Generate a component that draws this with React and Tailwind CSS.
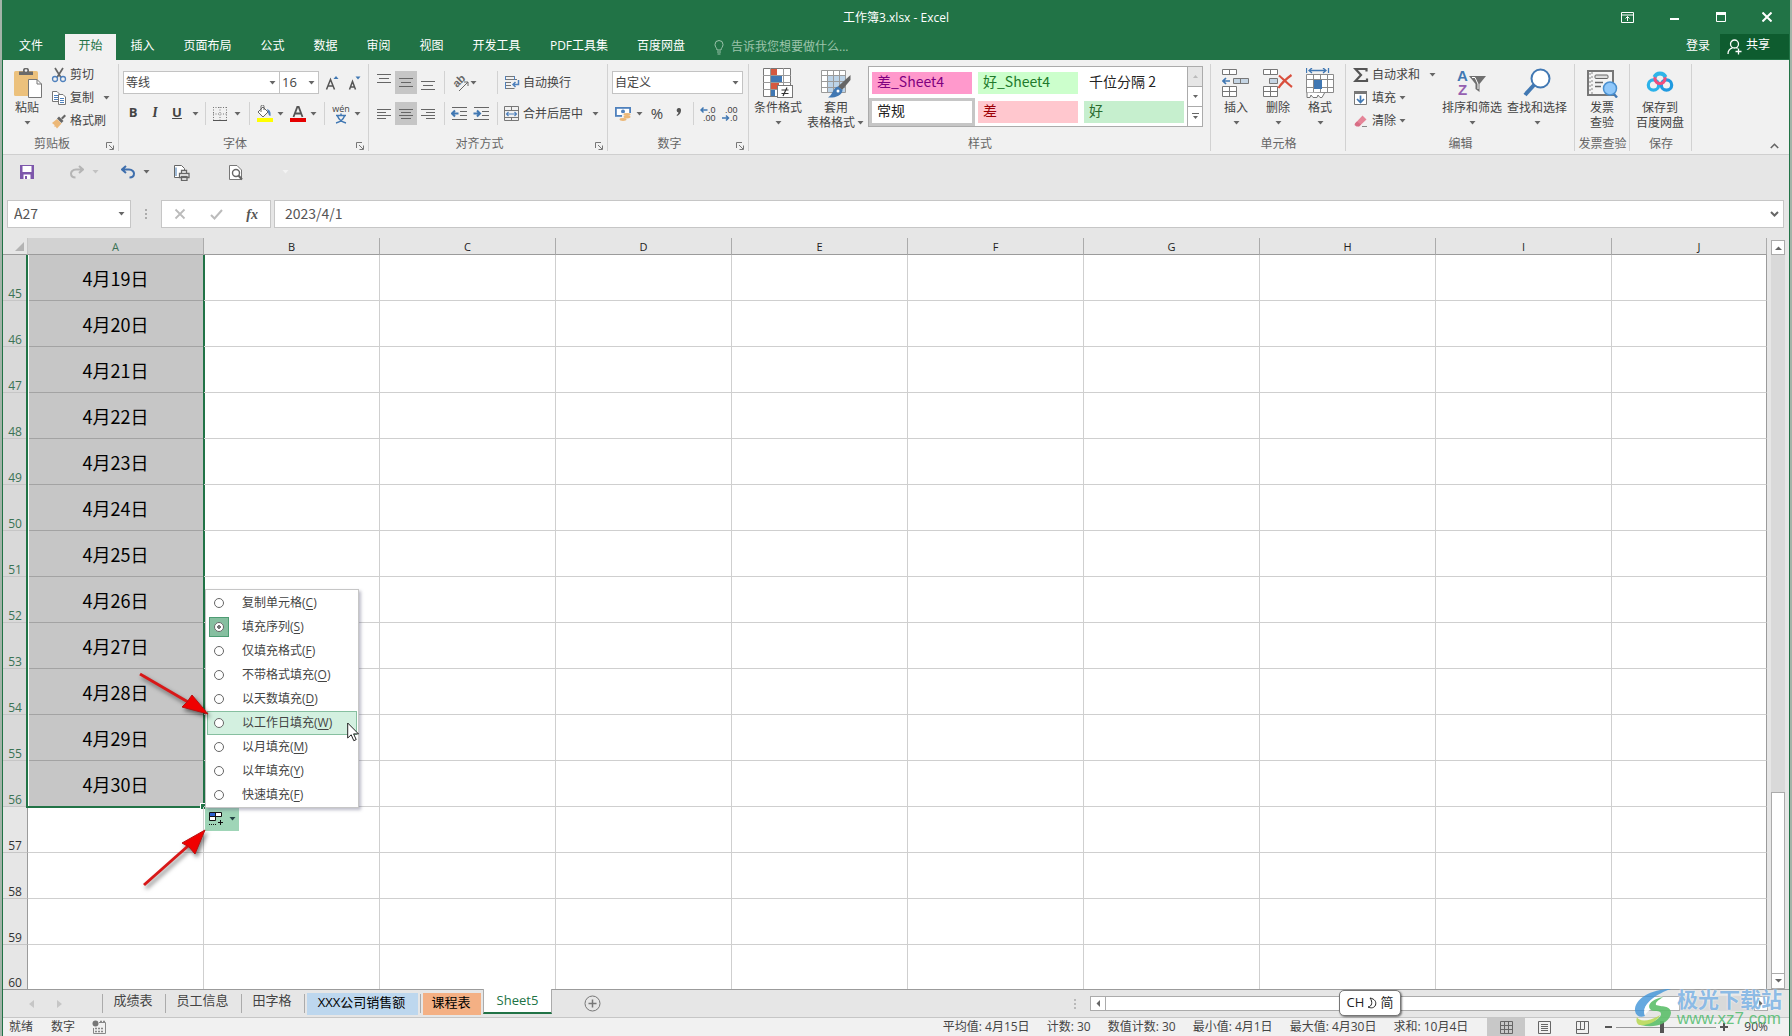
import React from "react";

/* ---------- small shared pieces ---------- */

function Caret({ className = "w-3.5", color = "#666" }) {
  return (
    <span className={`flex shrink-0 items-center justify-center ${className}`}>
      <svg width="7" height="4" viewBox="0 0 7 4"><path d="M0.5 0H6.5L3.5 3.6Z" fill={color} /></svg>
    </span>
  );
}

function Sep({ className = "" }) {
  return <span className={`h-[23px] w-px shrink-0 bg-[#d2d2d2] ${className}`} />;
}

function Group({ label, launcher, className, children, labelClass = "" }) {
  return (
    <section className={`relative flex h-[93px] shrink-0 flex-col ${className}`}>
      <div className="h-[76px]">{children}</div>
      <div className={`whitespace-nowrap text-center leading-4 text-[#666] ${labelClass}`}>{label}</div>
      {launcher && (
        <button aria-label={`${label}设置`} className="absolute bottom-[3px] right-[5px]">
          <svg width="8" height="8" viewBox="0 0 8 8" fill="none" stroke="#777"><path d="M0.5 6V0.5H6M3 3L7 7M7.5 3.5V7.5H3.5" /></svg>
        </button>
      )}
      <span className="absolute right-0 top-1 h-[87px] w-px bg-[#d2d2d2]" />
    </section>
  );
}

function Big({ icon, lines, arrow, className }) {
  return (
    <button className={`flex shrink-0 flex-col items-center pt-2 leading-[15px] ${className}`}>
      <span className="mb-0.5 flex h-[30px] items-center justify-center">{icon}</span>
      {lines.map((l, i) => (
        <span key={l} className="flex whitespace-nowrap">{l}{arrow === "inline" && i === lines.length - 1 && <Caret className="w-2.5" />}</span>
      ))}
      {arrow === "below" && <Caret className="h-4 w-3.5" />}
    </button>
  );
}

function Small({ icon, label, caret }) {
  return (
    <button className="flex h-[23px] items-center whitespace-nowrap">
      <span className="mr-[3px] flex w-4 justify-center">{icon}</span>
      <span>{label}</span>
      {caret && <Caret className={caret} />}
    </button>
  );
}

function Combo({ label, value, className }) {
  return (
    <div className={`relative h-[23px] border border-[#c3c3c3] bg-white ${className}`}>
      <select aria-label={label} className="h-full w-full appearance-none bg-transparent pl-0.5 text-[#444] outline-none">
        <option>{value}</option>
      </select>
      <Caret className="pointer-events-none absolute right-0 top-0 h-full w-3.5" />
    </div>
  );
}

/* ---------- icons ---------- */

const S = ({ w = 16, h = 16, children, ...p }) => (
  <svg width={w} height={h} viewBox={`0 0 ${w} ${h}`} fill="none" aria-hidden="true" {...p}>{children}</svg>
);

const PasteIcon = () => (
  <S w={32} h={30}>
    <rect x="3" y="3" width="24" height="25" rx="1.5" fill="#ecc17c" />
    <path d="M8 7V3.5H12V2A3 2.2 0 0 1 18 2V3.5H22V7Z" fill="#6a6a6a" /><circle cx="15" cy="2.5" r="1.3" fill="#f1f1f1" />
    <path d="M17.5 11.5H26L30.5 16V29.5H17.5Z" fill="#fff" stroke="#777" /><path d="M26 11.5V16H30.5" stroke="#777" />
  </S>
);
const CutIcon = () => (
  <S><path d="M4 1L10 10.5M12 1L6 10.5" stroke="#666" strokeWidth="1.7" /><circle cx="4" cy="12" r="2.5" stroke="#4f81bd" strokeWidth="1.3" /><circle cx="12" cy="12" r="2.5" stroke="#4f81bd" strokeWidth="1.3" /></S>
);
const CopyIcon = () => (
  <S><path d="M1.5 1.5H6L8.5 4V11.5H1.5Z" fill="#fff" stroke="#777" /><path d="M3 5.5H7M3 7.5H7M3 9.5H7" stroke="#4f81bd" /><path d="M7.5 4.5H12L14.5 7V14.5H7.5Z" fill="#fff" stroke="#777" /><path d="M9 8.5H13M9 10.5H13M9 12.5H13" stroke="#4f81bd" /></S>
);
const BrushIcon = () => (
  <S><path d="M1 10L6 6L10.5 10.5L6 15.5L4.5 13.5L3.5 14L3.5 12Z" fill="#ecb878" /><path d="M6 5.5L8 3.5L12.5 8L10.5 10Z" fill="#666" /><path d="M10 5L13.5 1.5L15 3L11.5 6.5Z" fill="#666" /></S>
);
const lines = (xs) => <S w={14} h={14} shapeRendering="crispEdges"><path d={xs} stroke="#666" /></S>;
const BordersIcon = () => (
  <S><path d="M1.5 1V15M8 1V15M14.5 1V15M1 1.5H15M1 8H15" stroke="#777" strokeDasharray="1 1.5" /><path d="M1 14.5H15" stroke="#555" /></S>
);
const BucketIcon = () => (
  <S w={18} h={18}><path d="M3 7L8 2L13 7L8 12Z" fill="#fff" stroke="#666" /><path d="M6 7V1.5A1.5 1.5 0 0 1 9 1.5V5" stroke="#666" /><path d="M12 4C15 5 16 7 15.5 11C14 11 13.5 9.5 13 7Z" fill="#4f81bd" /><rect x="2" y="13" width="16" height="4" fill="#ffff00" /></S>
);
const FontColorIcon = () => (
  <S w={18} h={18}><path d="M5.5 12L9.3 2H10.7L14.5 12M7 8.5H13" stroke="#555" strokeWidth="1.8" /><rect x="2" y="13" width="16" height="4" fill="#e60000" /></S>
);
const OrientIcon = () => (
  <S w={20} h={20}><text x="0" y="0" fontSize="11" fontWeight="bold" fill="#666" fontFamily="Liberation Sans, sans-serif" transform="translate(7 15) rotate(-45)">ab</text><path d="M9 18L18 9M14 9H18V13" stroke="#666" /></S>
);
const WrapIcon = () => (
  <S><path d="M1 1.5H10.5M1 4.5H13M1 7.5H7M1 10.5H7M1 13.5H10.5" stroke="#777" /><path d="M1.5 1V5M10.5 1V5M1.5 7V14" stroke="#4f81bd" /><path d="M14.5 5V9.5H9.5M11.5 7L9 9.5L11.5 12" stroke="#4f81bd" strokeWidth="1.5" /></S>
);
const MergeIcon = () => (
  <S><path d="M0.5 0.5H14.5V14.5H0.5ZM0.5 4.5H14.5M0.5 11.5H14.5M7.5 0.5V4.5M7.5 11.5V14.5" stroke="#777" /><path d="M2.5 8H12.5M4.5 6L2.5 8L4.5 10M10.5 6L12.5 8L10.5 10" stroke="#4f81bd" strokeWidth="1.2" /></S>
);
const Indent = ({ inc }) => (
  <S><path d="M1 1.5H16M9 5.5H16M9 9.5H16M1 13.5H16" stroke="#666" /><path d={inc ? "M0.5 7.5H7M4 4.5L7 7.5L4 10.5" : "M1 7.5H7.5M4 4.5L1 7.5L4 10.5"} stroke="#4178b3" strokeWidth="2" /></S>
);
const MoneyIcon = () => (
  <S><rect x="0.9" y="1.9" width="14.2" height="8" fill="#fff" stroke="#4f81bd" strokeWidth="1.8" /><circle cx="8" cy="5.5" r="2" fill="#4f81bd" /><rect x="7" y="7" width="9" height="9" fill="#f1f1f1" /><ellipse cx="12" cy="8.5" rx="3.5" ry="1.4" fill="#ecb878" /><ellipse cx="12" cy="11" rx="3.5" ry="1.4" fill="#ecb878" /><ellipse cx="8" cy="13.5" rx="3.5" ry="1.4" fill="#ecb878" /></S>
);
const DecIcon = ({ less }) => (
  <S w={18} h={16}>
    <g fontSize="9" fill="#444" fontFamily="Liberation Sans, sans-serif">
      <text x={less ? 3 : 8} y="7">{less ? ".00" : ".0"}</text>
      <text x={less ? 8 : 3} y="15">{less ? ".0" : ".00"}</text>
    </g>
    <path d={less ? "M0 12H6.5M4 9.5L6.5 12L4 14.5" : "M1 4H7.5M3.5 1.5L1 4L3.5 6.5"} stroke="#4178b3" strokeWidth="1.5" />
  </S>
);
const CondIcon = () => (
  <S w={30} h={30}>
    <path d="M0.5 0.5H27.5V28.5H0.5Z" fill="#fff" stroke="#777" /><path d="M7.5 0V28M20.5 0V28M0 7.5H28M0 14.5H28M0 21.5H28" stroke="#999" />
    <rect x="8" y="1" width="6" height="6" fill="#d5593f" /><rect x="8" y="8" width="11" height="6" fill="#4178b3" /><rect x="8" y="15" width="8" height="6" fill="#d5593f" /><rect x="8" y="22" width="4" height="6" fill="#4178b3" />
    <rect x="14.5" y="17.5" width="15" height="12" fill="#fff" stroke="#777" /><path d="M18.5 22H25.5M18.5 25.5H25.5M24 19.5L20 28" stroke="#333" strokeWidth="1.2" />
  </S>
);
const TableFmtIcon = () => (
  <S w={30} h={30}>
    <path d="M0.5 2.5H24.5V24.5H0.5Z" fill="#fff" /><rect x="7" y="8" width="17" height="16" fill="#bcd3e8" /><path d="M0.5 2.5H24.5V24.5H0.5ZM6.5 2V25M12.5 2V25M18.5 2V25M0 7.5H25M0 13.5H25M0 19.5H25" stroke="#9a9a9a" />
    <path d="M29.5 7V12L21 22L17 18.5Z" fill="#666" /><path d="M17 18.5L21.5 22C21 28 14 30 7 29.5C12 27 11.5 20 17 18.5Z" fill="#4178b3" /><circle cx="17" cy="23" r="1.5" fill="#fff" />
  </S>
);
const InsertIcon = () => (
  <S w={28} h={30}>
    <g stroke="#777" fill="#fff"><path d="M0.5 1.5H14.5V6.5H0.5ZM7.5 1.5V6.5M0.5 18.5H14.5V28.5H0.5ZM0.5 23.5H14.5M7.5 18.5V28.5" /><path d="M11.5 10.5H26.5V15.5H11.5ZM18.5 10.5V15.5" fill="#c5d5e4" /></g>
    <path d="M1 13H8M4 10L1 13L4 16" stroke="#4178b3" strokeWidth="1.7" />
  </S>
);
const DeleteIcon = () => (
  <S w={30} h={30}>
    <g stroke="#777" fill="#fff"><path d="M0.5 1.5H14.5V6.5H0.5ZM7.5 1.5V6.5M0.5 18.5H14.5V28.5H0.5ZM0.5 23.5H14.5M7.5 18.5V28.5" /><path d="M6.5 10.5H14.5V15.5H6.5Z" fill="#c5d5e4" /></g>
    <path d="M16 7.5C20 11 25 16 29 19M28.5 7C23 11 18 16 15.5 20" stroke="#d94f3d" strokeWidth="2.2" />
  </S>
);
const FormatIcon = () => (
  <S w={28} h={30}>
    <path d="M0.5 0V5M22.5 0V5M3 2.5H20M6 0L3 2.5L6 5M17 0L20 2.5L17 5" stroke="#4178b3" strokeWidth="1.3" />
    <path d="M0.5 6.5H27.5V24.5H0.5Z" fill="#fff" /><path d="M0.5 6.5H27.5V24.5H0.5ZM7.5 6V25M14.5 6V25M21.5 6V25M0 11.5H28M0 19.5H28" stroke="#8a8a8a" /><rect x="8" y="12" width="8" height="9" fill="#4178b3" />
    <path d="M1 24.5V29.5H4L5 27L7 29.5H11L12 27L14 29.5H16L18.5 25" stroke="#777" fill="#fff" />
  </S>
);
const SigmaIcon = () => <S><path d="M13.5 4.5V2H2.5L8 8L2.5 14H14V11.5" stroke="#555" strokeWidth="2.2" /></S>;
const FillIcon = () => <S><path d="M1.5 1.5H13.5V14.5H1.5Z" fill="#fff" stroke="#777" /><rect x="1" y="1" width="13" height="3" fill="#777" /><path d="M7.5 5.5V12.5M4 9L7.5 12.5L11 9" stroke="#4178b3" strokeWidth="1.7" /></S>;
const EraserIcon = () => <S><path d="M2 10.5L9.5 2.5L13.5 6.5L6 13.5Z" fill="#e58598" /><path d="M2 10.5L4 8.5L8 11.5L6 13.5H3.5L1.5 12Z" fill="#d86d85" /><path d="M9 13.5H14" stroke="#888" /></S>;
const SortIcon = () => (
  <S w={30} h={30}>
    <g fontSize="15" fontWeight="bold" fontFamily="Liberation Sans, sans-serif"><text x="0" y="13" fill="#4178b3">A</text><text x="1" y="27" fill="#9560b0">Z</text></g>
    <path d="M12 8H29L22.5 16V24L18.5 21V16Z" fill="#6f6f6f" /><path d="M15 9.5H18L21 16V21" stroke="#fff" strokeWidth="1" />
  </S>
);
const FindIcon = () => <S w={30} h={30}><circle cx="18.5" cy="10.5" r="9" fill="#fff" stroke="#4178b3" strokeWidth="2" /><path d="M12 17L3 27" stroke="#4178b3" strokeWidth="4" /></S>;
const InvoiceIcon = () => (
  <S w={32} h={30}>
    <rect x="2" y="3" width="25" height="24" fill="#f4f4f4" stroke="#777" strokeWidth="2" /><path d="M6 4V26M4 5V25" stroke="#888" strokeDasharray="2 2" /><rect x="9" y="7" width="13" height="3.5" rx="1" fill="#ddd" stroke="#666" /><path d="M9 14.5H17M9 18.5H15" stroke="#666" strokeWidth="1.5" />
    <path d="M27 25L31 29.5" stroke="#4178b3" strokeWidth="2.4" /><circle cx="24" cy="20.5" r="6.5" fill="#90c8fa" stroke="#4a90d0" strokeWidth="1.5" />
  </S>
);
const BaiduIcon = () => (
  <S w={28} h={30}>
    <circle cx="7.5" cy="17" r="5.2" stroke="#2bb2ea" strokeWidth="3.2" /><circle cx="20.5" cy="17" r="5.2" stroke="#209ae0" strokeWidth="3.2" />
    <circle cx="14" cy="10.5" r="5" stroke="#ef4f7d" strokeWidth="3.2" /><path d="M8.5 9A6 6 0 0 1 19.5 9" stroke="#2fb5e8" strokeWidth="4" />
  </S>
);

/* ---------- title and tabs ---------- */

const TABS = [
  ["文件", "w-[62px]"], ["开始", "w-[51px]"], ["插入", "w-[53px]"], ["页面布局", "w-[77px]"], ["公式", "w-[53px]"], ["数据", "w-[53px]"],
  ["审阅", "w-[53px]"], ["视图", "w-[53px]"], ["开发工具", "w-[77px]"], ["PDF工具集", "w-[88px]"], ["百度网盘", "w-[76px]"],
];

function TitleBar() {
  return (
    <header className="bg-[#217346] text-white">
      <div className="flex h-[34px] items-center px-[17px]">
        <div className="flex-1" />
        <h1 className="pt-0.5">工作簿3.xlsx - Excel</h1>
        <div className="flex flex-1 justify-end">
          <button aria-label="功能区显示选项" className="mr-9"><S w={13} h={11}><path d="M0.5 0.5H12.5V10.5H0.5ZM0.5 3H12.5M6.5 9V4.5M4.5 6.5L6.5 4.5L8.5 6.5" stroke="#fff" /></S></button>
          <button aria-label="最小化" className="mr-[37px] mt-1"><S w={9} h={2}><path d="M0 1H9" stroke="#fff" strokeWidth="2" /></S></button>
          <button aria-label="最大化" className="mr-9"><S w={10} h={10}><path d="M0.5 0.5H9.5V9.5H0.5Z" stroke="#fff" /><path d="M0 1.5H10" stroke="#fff" strokeWidth="3" /></S></button>
          <button aria-label="关闭"><S w={10} h={10}><path d="M0.5 0.5L9.5 9.5M9.5 0.5L0.5 9.5" stroke="#fff" strokeWidth="2" /></S></button>
        </div>
      </div>
      <nav className="flex h-[26px]">
        {TABS.map(([t, w], i) => (
          <button key={t} className={`shrink-0 whitespace-nowrap pb-0.5 ${w} ${i === 1 ? "bg-[#f1f1f1] text-[#217346]" : ""} ${i === 0 ? "pr-1.5" : ""}`}>{t}</button>
        ))}
        <label className="ml-[15px] flex items-center text-[#9cc4ab]">
          <S w={10} h={15}><path d="M3 10C3 8 1 7 1 4.5A4 4 0 0 1 9 4.5C9 7 7 8 7 10ZM3 12H7M3.5 14H6.5" stroke="#9cc4ab" /></S>
          <input aria-label="告诉我您想要做什么" placeholder="告诉我您想要做什么..." className="ml-[7px] w-40 bg-transparent outline-none placeholder:text-[#9cc4ab]" />
        </label>
        <div className="flex-1" />
        <button className="mr-[10px] pb-0.5">登录</button>
        <button className="flex h-[25px] w-[69px] items-center bg-[#0e5c2f] pl-[7px]">
          <S w={15} h={16}><circle cx="7.5" cy="5" r="4" stroke="#fff" strokeWidth="1.3" /><path d="M1 15C1 11.5 3 9.5 5.5 8.8M9.5 8.5L10.5 9.5M11.5 9.5V15.5M8.5 12.5H14.5" stroke="#fff" strokeWidth="1.3" /></S>
          <span className="ml-1 pb-1">共享</span>
        </button>
      </nav>
    </header>
  );
}

/* ---------- ribbon ---------- */

const STYLES = [
  ["差_Sheet4", "bg-[#ff99cc] text-[#800080]"],
  ["好_Sheet4", "bg-[#ccffcc] text-[#217a2b]"],
  ["千位分隔 2", "bg-white text-[#222]"],
  ["常规", "bg-white text-[#222]"],
  ["差", "bg-[#ffc7ce] text-[#9c0006]"],
  ["好", "bg-[#c6efce] text-[#2a6b2f]"],
];

const toolRow = "flex h-[23px] items-center";
const alignBtn = "flex h-[23px] w-[22px] shrink-0 justify-center";

function Ribbon() {
  return (
    <div className="flex h-[95px] border-b border-[#cfcfcf] bg-[#f1f1f1] text-[#444]">
      <Group label="剪贴板" launcher className="w-[116px]" labelClass="pr-[18px]">
        <div className="flex">
          <Big icon={<PasteIcon />} lines={["粘贴"]} arrow="below" className="w-[48px]" />
          <div className="pt-[3px]">
            <Small icon={<CutIcon />} label="剪切" />
            <Small icon={<CopyIcon />} label="复制" caret="ml-[5px] w-3.5" />
            <Small icon={<BrushIcon />} label="格式刷" />
          </div>
        </div>
      </Group>

      <Group label="字体" launcher className="w-[250px]" labelClass="pr-[18px]">
        <div className={`${toolRow} mt-[11px] pl-1`}>
          <Combo label="字体" value="等线" className="w-[157px]" />
          <Combo label="字号" value="16" className="-ml-px w-10 [&>select]:text-[13px]" />
          <button aria-label="增大字号" className="ml-1.5"><S><path d="M1.5 14.5L5.5 4.5L9.5 14.5M3 11H8" stroke="#555" strokeWidth="1.5" /><path d="M8.5 4H13.5L11 1Z" fill="#4178b3" /></S></button>
          <button aria-label="减小字号" className="ml-1.5"><S><path d="M2.5 14.5L5.5 6.5L8.5 14.5M3.5 12H7.5" stroke="#555" strokeWidth="1.5" /><path d="M8.5 1.5H13.5L11 4.5Z" fill="#4178b3" /></S></button>
        </div>
        <div className={`${toolRow} mt-2 pl-[3px]`}>
          <button className="w-[22px] pb-0.5 text-[13px] font-bold">B</button>
          <button className="w-[22px] pb-0.5 font-serif text-[14px] font-bold italic">I</button>
          <button className="w-[22px] pb-0.5 text-[13px] font-bold underline">U</button>
          <Caret />
          <Sep className="ml-[3px]" />
          <button aria-label="边框" className="ml-1.5"><BordersIcon /></button><Caret className="ml-0.5 w-3.5" />
          <Sep className="ml-[5px]" />
          <button aria-label="填充颜色" className="ml-[5px]"><BucketIcon /></button><Caret />
          <button aria-label="字体颜色" className="ml-px"><FontColorIcon /></button><Caret />
          <Sep className="ml-1" />
          <button aria-label="显示或隐藏拼音字段" className="ml-1.5">
            <S w={20} h={22} className="overflow-visible">
              <text x="10" y="9" textAnchor="middle" fontSize="9" fill="#444">wén</text>
              <path d="M5 12.5H15M10 10.5V12.5M6.5 13C8 17 11 19 15 20M13.5 13C12 17 9 19 5 20" stroke="#4178b3" strokeWidth="1.5" />
            </S>
          </button>
          <Caret className="w-3" />
        </div>
      </Group>

      <Group label="对齐方式" launcher className="w-[239px]" labelClass="pr-[18px]">
        <div className={`${toolRow} mt-[11px] pl-1`}>
          <button aria-label="顶端对齐" className={`${alignBtn} pt-[3px]`}>{lines("M0 .5H14M2 4.5H12M0 8.5H14")}</button>
          <button aria-label="垂直居中" className={`${alignBtn} items-center bg-[#c6c6c6]`}>{lines("M0 2.5H14M2 6.5H12M0 10.5H14")}</button>
          <button aria-label="底端对齐" className={`${alignBtn} items-end pb-1`}>{lines("M0 5.5H14M2 9.5H12M0 13.5H14")}</button>
          <Sep className="ml-[5px]" />
          <button aria-label="方向" className="ml-[5px]"><OrientIcon /></button><Caret className="-ml-1 w-3.5" />
          <Sep className="ml-[17px]" />
          <button className="ml-1.5 flex items-center gap-[3px]"><WrapIcon />自动换行</button>
        </div>
        <div className={`${toolRow} mt-2 pl-1`}>
          <button aria-label="左对齐" className={`${alignBtn} items-center`}>{lines("M0 2.5H14M0 5.5H9M0 8.5H14M0 11.5H9")}</button>
          <button aria-label="居中" className={`${alignBtn} items-center bg-[#c6c6c6]`}>{lines("M0 2.5H14M2 5.5H12M0 8.5H14M2 11.5H12")}</button>
          <button aria-label="右对齐" className={`${alignBtn} items-center`}>{lines("M0 2.5H14M5 5.5H14M0 8.5H14M5 11.5H14")}</button>
          <Sep className="ml-[5px]" />
          <button aria-label="减少缩进量" className="ml-1.5"><Indent /></button>
          <button aria-label="增加缩进量" className="ml-1.5"><Indent inc /></button>
          <Sep className="ml-2" />
          <button className="ml-1.5 flex items-center gap-[3px]"><MergeIcon />合并后居中</button><Caret className="ml-[5px] w-3.5" />
        </div>
      </Group>

      <Group label="数字" launcher className="w-[141px]" labelClass="pr-[18px]">
        <div className={`${toolRow} mt-[11px] pl-1`}>
          <Combo label="数字格式" value="自定义" className="w-[131px]" />
        </div>
        <div className={`${toolRow} mt-2 pl-[7px]`}>
          <button aria-label="会计数字格式"><MoneyIcon /></button><Caret className="ml-px w-3.5" />
          <button className="w-[22px] text-[15px]">%</button>
          <button aria-label="千位分隔样式" className="flex w-5 justify-center pb-1"><S w={5} h={8}><path d="M2.5 0A2.3 2.3 0 0 1 5 2.5C5 5 3.5 7 1 8L0.6 7C2 6 2.5 5 2.4 4.5A2.3 2.3 0 0 1 2.5 0Z" fill="#555" /></S></button>
          <Sep className="ml-[5px]" />
          <button aria-label="增加小数位数" className="ml-1.5"><DecIcon /></button>
          <button aria-label="减少小数位数" className="ml-1"><DecIcon less /></button>
        </div>
      </Group>

      <Group label="样式" className="w-[462px]">
        <div className="flex pl-0.5">
          <Big icon={<CondIcon />} lines={["条件格式"]} arrow="below" className="w-[54px]" />
          <Big icon={<TableFmtIcon />} lines={["套用", "表格格式"]} arrow="inline" className="w-[62px]" />
          <div className="ml-px mt-1.5 flex h-[61px] border border-[#ababab] bg-white">
            <div className="grid grid-cols-3 pt-0.5">
              {STYLES.map(([name, c], i) => (
                <button key={name} className={`h-[28px] w-[106px] border-[3px] ${i === 3 ? "border-[#c6c6c6]" : "border-white"}`}>
                  <span className={`block h-[22px] pl-[5px] text-left font-['Noto_Sans_CJK_SC',sans-serif] text-[14px] leading-[19px] ${c}`}>{name}</span>
                </button>
              ))}
            </div>
            <div className="flex w-[15px] flex-col divide-y divide-[#ababab] border-l border-[#ababab]">
              <button aria-label="上一行" className="flex flex-1 items-center justify-center bg-[#e6e6e6]"><S w={5} h={3}><path d="M0 3H5L2.5 0Z" fill="#bbb" /></S></button>
              <button aria-label="下一行" className="flex flex-1 items-center justify-center"><S w={5} h={3}><path d="M0 0H5L2.5 3Z" fill="#666" /></S></button>
              <button aria-label="其他样式" className="flex flex-1 items-center justify-center"><S w={7} h={7}><path d="M0 0.5H7" stroke="#666" /><path d="M1 3H6L3.5 6Z" fill="#666" /></S></button>
            </div>
          </div>
        </div>
      </Group>

      <Group label="单元格" className="w-[135px]">
        <div className="flex pl-1">
          <Big icon={<InsertIcon />} lines={["插入"]} arrow="below" className="w-[42px]" />
          <Big icon={<DeleteIcon />} lines={["删除"]} arrow="below" className="w-[42px]" />
          <Big icon={<FormatIcon />} lines={["格式"]} arrow="below" className="w-[42px]" />
        </div>
      </Group>

      <Group label="编辑" className="w-[229px]">
        <div className="flex pl-[7px]">
          <div className="w-[86px] pt-[3px]">
            <Small icon={<SigmaIcon />} label="自动求和" caret="ml-[5px] w-3.5" />
            <Small icon={<FillIcon />} label="填充" caret="w-3" />
            <Small icon={<EraserIcon />} label="清除" caret="w-3" />
          </div>
          <Big icon={<SortIcon />} lines={["排序和筛选"]} arrow="below" className="w-[66px]" />
          <Big icon={<FindIcon />} lines={["查找和选择"]} arrow="below" className="w-[64px]" />
        </div>
      </Group>

      <Group label="发票查验" className="w-[55px]">
        <Big icon={<InvoiceIcon />} lines={["发票", "查验"]} className="w-[54px]" />
      </Group>
      <Group label="保存" className="w-[62px]">
        <Big icon={<BaiduIcon />} lines={["保存到", "百度网盘"]} className="w-[60px]" />
      </Group>
      <div className="flex flex-1 items-end justify-end pb-[5px] pr-2.5">
        <button aria-label="折叠功能区"><S w={9} h={6}><path d="M0.8 5L4.5 1.3L8.2 5" stroke="#666" strokeWidth="1.6" /></S></button>
      </div>
    </div>
  );
}

/* ---------- quick access and formula bar ---------- */

function QuickAccess() {
  return (
    <div className="flex h-[34px] items-center pl-[17px]">
      <button aria-label="保存"><S w={14} h={14}><path d="M0 0H14V14H0Z" fill="#7d57ab" /><path d="M2.5 1H11.5V7H2.5Z" fill="#fff" /><path d="M3.5 9.5H10.5V14H3.5Z" fill="#fff" /><rect x="5" y="11" width="2" height="3" fill="#7d57ab" /></S></button>
      <button aria-label="恢复" className="ml-9"><S w={14} h={14}><path d="M9 1L13 4.5L9 8M13 4.5H6C2.5 4.5 1 7 1 8.5C1 11 3 12.5 5.5 12.5" stroke="#b5b5b5" strokeWidth="2" /></S></button>
      <Caret className="ml-1 w-3.5" color="#c2c2c2" />
      <button aria-label="撤消" className="ml-[19px]"><S w={14} h={14}><path d="M5 1L1 4.5L5 8M1 4.5H8C11.5 4.5 13 7 13 8.5C13 11 11 12.5 8.5 12.5" stroke="#3f6fad" strokeWidth="2" /></S></button>
      <Caret className="ml-1 w-3.5" />
      <button aria-label="打印" className="ml-5"><S w={17} h={17}><path d="M6 13.5H1.5V1.5H8.5L11.5 4.5V6" fill="#fff" stroke="#666" /><path d="M3 3.5V12" stroke="#4178b3" /><path d="M8.5 9V6.5H13.5V9M6.5 9.5H16V13.5H6.5ZM8.5 12.5H14V16.5H8.5Z" stroke="#666" strokeWidth="1.3" fill="#fff" /></S></button>
      <button aria-label="打印预览" className="ml-[38px]"><S w={15} h={17}><path d="M1.5 1.5H9L13.5 6V15.5H1.5Z" fill="#fff" stroke="#777" /><circle cx="8" cy="9" r="3.5" stroke="#666" strokeWidth="1.4" /><path d="M10.5 11.5L14 15.5" stroke="#666" strokeWidth="2" /></S></button>
      <Caret className="ml-[35px] w-3.5" color="#f3f3f3" />
    </div>
  );
}

function FormulaBar() {
  return (
    <div className="mt-[11px] flex h-7 pl-1 pr-[5px] font-['Noto_Sans_CJK_SC',sans-serif] text-[14px] text-[#555]">
      <div className="relative w-[124px] shrink-0 border border-[#c6c6c6] bg-white">
        <input aria-label="名称框" defaultValue="A27" className="h-full w-full bg-transparent pb-0.5 pl-1.5 outline-none" />
        <Caret className="absolute right-0.5 top-0 h-full w-3.5" />
      </div>
      <div className="flex w-[30px] items-center justify-center"><S w={2} h={10}><path d="M1 0V2M1 4V6M1 8V10" stroke="#999" strokeWidth="1.5" /></S></div>
      <div className="flex w-[110px] shrink-0 items-center justify-between border border-[#c6c6c6] bg-white pl-3 pr-3">
        <button aria-label="取消"><S w={12} h={12}><path d="M1.5 1.5L10.5 10.5M10.5 1.5L1.5 10.5" stroke="#bbb" strokeWidth="1.8" /></S></button>
        <button aria-label="输入"><S w={13} h={11}><path d="M1 6L4.5 9.5L12 1" stroke="#bbb" strokeWidth="2" /></S></button>
        <button aria-label="插入函数" className="font-[Liberation_Serif] text-[14px] font-bold italic">fx</button>
      </div>
      <div className="relative ml-[3px] flex-1 border border-[#c6c6c6] bg-white">
        <input aria-label="编辑栏" defaultValue="2023/4/1" className="h-full w-full bg-transparent pb-0.5 pl-2.5 outline-none" />
        <span className="absolute right-1 top-0 flex h-full items-center"><S w={9} h={6}><path d="M1 1L4.5 4.5L8 1" stroke="#666" strokeWidth="2" /></S></span>
      </div>
    </div>
  );
}

/* ---------- autofill menu ---------- */

const MENU = [
  ["复制单元格", "C"], ["填充序列", "S"], ["仅填充格式", "F"], ["不带格式填充", "O"], ["以天数填充", "D"],
  ["以工作日填充", "W"], ["以月填充", "M"], ["以年填充", "Y"], ["快速填充", "F"],
];

function FillOptions() {
  return (
    <div className="absolute left-px top-px z-10 font-['Open_Sans','Noto_Sans_CJK_SC',sans-serif]">
      <div className="absolute bottom-full left-0 w-[154px] border border-[#c6c6c6] bg-white pl-px pr-px pt-px shadow-[2px_2px_3px_rgba(90,90,120,0.4)]">
        {MENU.map(([name, key], i) => (
          <label
            key={name}
            className={`flex h-6 items-center whitespace-nowrap border text-[12px] text-[#444] ${i === 5 ? "border-[#86bfa0] bg-[#d3f0e0]" : "border-transparent"}`}
          >
            <span className={`ml-px flex h-5 w-5 items-center justify-center border ${i === 1 ? "border-[#4d9c73] bg-[#86bfa0]" : "border-transparent"}`}>
              <input
                type="radio"
                name="fill"
                defaultChecked={i === 1}
                className="h-[10px] w-[10px] appearance-none rounded-full border border-[#666] bg-white checked:bg-[radial-gradient(circle,#777_2px,white_2px)]"
              />
            </span>
            <span className="ml-[13px]">{name}(<u className="underline-offset-2">{key}</u>)</span>
          </label>
        ))}
      </div>
      <button aria-label="自动填充选项" className="flex h-[23px] w-[34px] items-center bg-[#9fd5b7] pb-0.5 pl-1">
        <S w={15} h={14}><path d="M0.5 0.5H12.5V4.5H0.5ZM0.5 4.5H6.5V8.5H0.5Z" fill="#fff" stroke="#111" /><rect x="1" y="1" width="5" height="3" fill="#2b5fd0" /><path d="M6.5 0V5M9 10.5H14M11.5 8V13" stroke="#111" /><path d="M0 12.5H8" stroke="#111" strokeDasharray="1 1" /></S>
        <Caret className="ml-px w-3.5" color="#244" />
      </button>
      <svg aria-hidden="true" width="220" height="240" viewBox="0 0 220 240" fill="none" className="pointer-events-none absolute -left-[75px] -top-[148px] drop-shadow-[2px_3px_2px_rgba(0,0,0,0.5)]">
        <path d="M10 14L58 42" stroke="#d81818" strokeWidth="3" /><path d="M78 54L52 47L57 42L62 35Z" fill="#f00000" stroke="#b81010" />
        <path d="M14 225L58 186" stroke="#d81818" strokeWidth="3" /><path d="M75 170L65 194L59 187L52 183Z" fill="#f00000" stroke="#b81010" />
      </svg>
      <svg aria-hidden="true" width="13" height="20" viewBox="0 0 13 20" className="pointer-events-none absolute -top-[86px] left-[142px]">
        <path d="M0.7 1V16L4.2 12.8L6.8 18.7L9.2 17.6L6.6 11.9H11.5Z" fill="#fff" stroke="#222" />
      </svg>
    </div>
  );
}

/* ---------- sheet ---------- */

const COLS = ["A", "B", "C", "D", "E", "F", "G", "H", "I", "J"];
const ROWS = Array.from({ length: 16 }, (_, i) => 45 + i);

function Sheet() {
  return (
    <table className="w-full table-fixed border-separate border-spacing-0 bg-white">
      <colgroup>
        <col className="w-[25px]" />
        {COLS.slice(0, 9).map((c) => <col key={c} className="w-[176px]" />)}
        <col />
      </colgroup>
      <thead>
        <tr className="h-[17px] leading-4">
          <th aria-label="全选" className="border-b border-r border-b-[#9b9b9b] border-r-[#c6c6c6] bg-[#e6e6e6]">
            <svg width="9" height="9" viewBox="0 0 9 9" className="ml-auto mr-[3px]"><path d="M9 0V9H0Z" fill="#b4b4b4" /></svg>
          </th>
          {COLS.map((c, i) => (
            <th
              key={c}
              scope="col"
              className={`border-b border-r border-b-[#9b9b9b] border-r-[#ababab] p-0 pt-0.5 text-[11px] font-normal leading-[14px] ${i === 9 ? "pl-5" : ""} ${i === 0 ? "bg-[#d2d2d2] text-[#3b7355]" : "bg-[#e6e6e6] text-[#222]"}`}
            >
              {c}
            </th>
          ))}
        </tr>
      </thead>
      <tbody>
        {ROWS.map((r) => {
          const sel = r < 57;
          const last = r === 60;
          return (
            <tr key={r} className={last ? "h-11" : "h-[46px]"}>
              <th
                scope="row"
                className={`border-r p-0 align-bottom text-[12px] font-normal leading-[13px] ${last ? "" : "border-b"} border-b-[#c6c6c6] border-r-[#9b9b9b] ${sel ? "bg-[#d9d9d9] text-[#3b7355]" : "bg-[#e6e6e6] text-[#333]"}`}
              >
                {r}
              </th>
              {COLS.map((c, i) => {
                const inSel = sel && i === 0;
                return (
                  <td
                    key={c}
                    className={`relative border-r p-0 pt-0.5 text-center font-['Noto_Sans_CJK_SC',sans-serif] text-[18px] text-black ${last ? "" : "border-b"} ${i === 9 ? "border-r-[#9b9b9b]" : "border-r-[#cfcfcf]"} ${inSel ? "border-b-[#a3a3a3] bg-[#c6c6c6]" : "border-b-[#cfcfcf]"}`}
                  >
                    {inSel && `4月${r - 26}日`}
                    {inSel && (
                      <span className={`absolute -left-0.5 -right-0.5 top-0 border-x-2 border-[#217346] shadow-[inset_1px_0_0_white] ${r === 56 ? "-bottom-0.5 border-b-2" : "-bottom-px"}`}>
                        {r === 56 && <span className="absolute -bottom-[3px] -right-[3px] h-[6px] w-[6px] border-l border-t border-white bg-[#217346]" />}
                      </span>
                    )}
                    {r === 57 && i === 1 && <FillOptions />}
                  </td>
                );
              })}
            </tr>
          );
        })}
      </tbody>
    </table>
  );
}

function VerticalScroll() {
  return (
    <div className="ml-1 mr-1 mt-0.5 flex w-3.5 flex-col">
      <button aria-label="向上滚动" className="flex h-[15px] items-center justify-center border border-[#ababab] bg-white"><S w={7} h={4}><path d="M0 4H7L3.5 0.5Z" fill="#666" /></S></button>
      <div className="flex flex-1 flex-col justify-end bg-[#d9d9d9]"><div className="h-[182px] border border-[#ababab] bg-white" /></div>
      <button aria-label="向下滚动" className="flex h-[15px] items-center justify-center border border-t-0 border-[#ababab] bg-white"><S w={7} h={4}><path d="M0 0H7L3.5 3.5Z" fill="#666" /></S></button>
    </div>
  );
}

/* ---------- sheet tabs and status bar ---------- */

function SheetTabs() {
  const tab = "h-[25px] whitespace-nowrap pb-1";
  const bar = <span className="my-1 w-px bg-[#ababab]" />;
  return (
    <div className="flex h-7 border-t border-[#9b9b9b] bg-[#e6e6e6] text-[13px] text-[#444]">
      <div className="flex w-[99px] gap-[23px] pl-[26px]">
        <button aria-label="上一个工作表"><S w={5} h={8}><path d="M5 0V8L0 4Z" fill="#c6c6c6" /></S></button>
        <button aria-label="下一个工作表"><S w={5} h={8}><path d="M0 0V8L5 4Z" fill="#c6c6c6" /></S></button>
      </div>
      {bar}
      <button className={`${tab} w-[62px] pr-0.5`}>成绩表</button>
      {bar}
      <button className={`${tab} w-[75px] pr-0.5`}>员工信息</button>
      {bar}
      <button className={`${tab} w-[62px] pr-0.5`}>田字格</button>
      {bar}
      <button className="mb-[2px] ml-0.5 mt-[3px] w-[111px] whitespace-nowrap bg-[#bdd7ee] pb-1.5 pr-0.5 text-black">XXX公司销售额</button>
      <span className="my-1 ml-0.5 w-px bg-[#ababab]" />
      <button className="mb-[2px] ml-0.5 mt-[3px] w-[58px] bg-[#f4b084] pb-1.5 pr-0.5 text-black">课程表</button>
      <button className="-mt-px ml-0.5 h-[25px] w-[69px] border-x border-b-2 border-x-[#ababab] border-b-[#217346] bg-white text-[#217346]">Sheet5</button>
      <button aria-label="新工作表" className="ml-8"><S w={17} h={17}><circle cx="8.5" cy="8.5" r="7.5" stroke="#777" /><path d="M8.5 4.5V12.5M4.5 8.5H12.5" stroke="#777" strokeWidth="1.5" /></S></button>
      <div className="flex-1" />
      <div className="flex items-center pr-[14px]"><S w={2} h={10}><path d="M1 0V2M1 4V6M1 8V10" stroke="#aaa" strokeWidth="1.5" /></S></div>
      <div className="mb-1.5 mr-[21px] mt-1.5 flex w-[678px] bg-[#d9d9d9]">
        <button aria-label="向左滚动" className="flex w-4 items-center justify-center border border-[#ababab] bg-white"><S w={4} h={7}><path d="M4 0V7L0.5 3.5Z" fill="#666" /></S></button>
        <div className="-ml-px w-[575px] border border-[#ababab] bg-white" />
        <button aria-label="向右滚动" className="ml-auto flex w-3.5 items-center justify-center border border-[#ababab] bg-white"><S w={4} h={7}><path d="M0 0V7L3.5 3.5Z" fill="#666" /></S></button>
      </div>
    </div>
  );
}

const STATS = ["平均值: 4月15日", "计数: 30", "数值计数: 30", "最小值: 4月1日", "最大值: 4月30日", "求和: 10月4日"];

function StatusBar() {
  const view = "flex w-[38px] items-center justify-center";
  return (
    <footer className="flex h-[19px] items-stretch border-t border-[#c6c6c6] bg-[#f1f1f1] leading-[18px] text-[#444]">
      <span className="ml-1.5">就绪</span>
      <span className="ml-[18px]">数字</span>
      <button aria-label="宏录制" className="ml-[17px]"><S w={14} h={14}><circle cx="3.5" cy="3.5" r="3" fill="#777" /><path d="M7 2.5H13.5V13.5H1.5V8" stroke="#888" /><path d="M8 1.5H13M3 8.5H12M3 11.5H12" stroke="#888" strokeDasharray="2 1" strokeWidth="1.5" /></S></button>
      <div className="flex-1" />
      <div className="flex gap-[17px] whitespace-nowrap pr-[19px]">{STATS.map((s) => <span key={s}>{s}</span>)}</div>
      <button aria-label="普通视图" className={`${view} bg-[#c8c8c8]`}><S w={13} h={13}><path d="M0.5 0.5H12.5V12.5H0.5ZM4.5 0V13M8.5 0V13M0 4.5H13M0 8.5H13" stroke="#666" /></S></button>
      <button aria-label="页面布局" className={view}><S w={13} h={13}><path d="M0.5 0.5H12.5V12.5H0.5ZM3 3.5H10M3 5.5H10M3 7.5H10M3 9.5H10" stroke="#666" /></S></button>
      <button aria-label="分页预览" className={view}><S w={13} h={13}><path d="M0.5 0.5H12.5V12.5H0.5ZM4.5 0V8.5M8.5 0V8.5M0 8.5H8.5" stroke="#666" /></S></button>
      <button aria-label="缩小" className="flex w-[15px] items-center justify-center"><S w={7} h={2}><path d="M0 1H7" stroke="#555" strokeWidth="2" /></S></button>
      <div className="flex w-[100px] items-center">
        <input
          type="range"
          aria-label="显示比例"
          defaultValue="45"
          className="h-3 w-full appearance-none bg-[linear-gradient(#999,#999)] bg-[length:100%_1px] bg-center bg-no-repeat [&::-webkit-slider-thumb]:h-3 [&::-webkit-slider-thumb]:w-1 [&::-webkit-slider-thumb]:appearance-none [&::-webkit-slider-thumb]:bg-[#555]"
        />
      </div>
      <button aria-label="放大" className="flex w-[15px] items-center justify-center"><S w={8} h={8}><path d="M0 4H8M4 0V8" stroke="#555" strokeWidth="2" /></S></button>
      <span className="ml-[13px] mr-[21px]">90%</span>
    </footer>
  );
}

function Watermark() {
  return (
    <div aria-hidden="true" className="pointer-events-none absolute bottom-1.5 right-[7px] z-20 flex">
      <svg width="42" height="40" viewBox="0 0 42 40" fill="none" className="mr-0.5">
        <path d="M38 1C18 1 1 11 2 23C3 28 7 30 12 28C8 20 17 8 38 1Z" fill="#3f93d8" fillOpacity="0.8" />
        <path d="M12 27C9 18 18 10 30 8C22 12 18 16 21 20C17 21 14 24 12 27Z" fill="#fff" fillOpacity="0.85" />
        <path d="M30 9C19 11 14 17 17 21C20 25 28 21 28 26C28 31 17 36 8 37C22 41 37 35 38 25C38 17 28 19 23 17C22 14 26 12 30 9Z" fill="#5cbf6a" fillOpacity="0.9" />
        <path d="M4 29C6 34 16 34 27 27C24 34 14 38 6 37C3 35 3 32 4 29Z" fill="#b9d95a" fillOpacity="0.9" />
      </svg>
      <div>
        <div className="font-['Noto_Sans_CJK_SC',sans-serif] text-[21px] font-bold leading-[20px] text-[#5c9fdc]/70 [text-shadow:0_0_2px_white]">极光下载站</div>
        <div className="font-[Liberation_Sans] text-[17px] leading-[22px] text-[#45b865]/80">www.xz7.com</div>
      </div>
    </div>
  );
}

export default function App() {
  return (
    <div className="min-h-screen bg-[#a3b3a8] px-0.5 font-['Open_Sans','Noto_Sans_CJK_SC',sans-serif] text-[12px]">
      <div className="relative min-h-screen overflow-hidden border-x border-[#217346] bg-[#e6e6e6]">
        <TitleBar />
        <Ribbon />
        <QuickAccess />
        <FormulaBar />
        <main className="mt-2.5 flex">
          <div className="min-w-0 flex-1"><Sheet /></div>
          <VerticalScroll />
        </main>
        <SheetTabs />
        <StatusBar />
        <button className="absolute bottom-5 right-[388px] z-10 flex h-[26px] w-[62px] items-center justify-center gap-[3px] rounded-[5px] border border-[#777] bg-white text-[13px] text-[#222] shadow-[1px_1px_2px_rgba(0,0,0,0.5)]">
          CH
          <S w={10} h={12}><path d="M3 1C8 2 9.5 5 8.5 8C7.5 11 4 11.5 1 10C5 9.5 6 5 3 1Z" stroke="#222" /></S>
          简
        </button>
        <Watermark />
      </div>
    </div>
  );
}
